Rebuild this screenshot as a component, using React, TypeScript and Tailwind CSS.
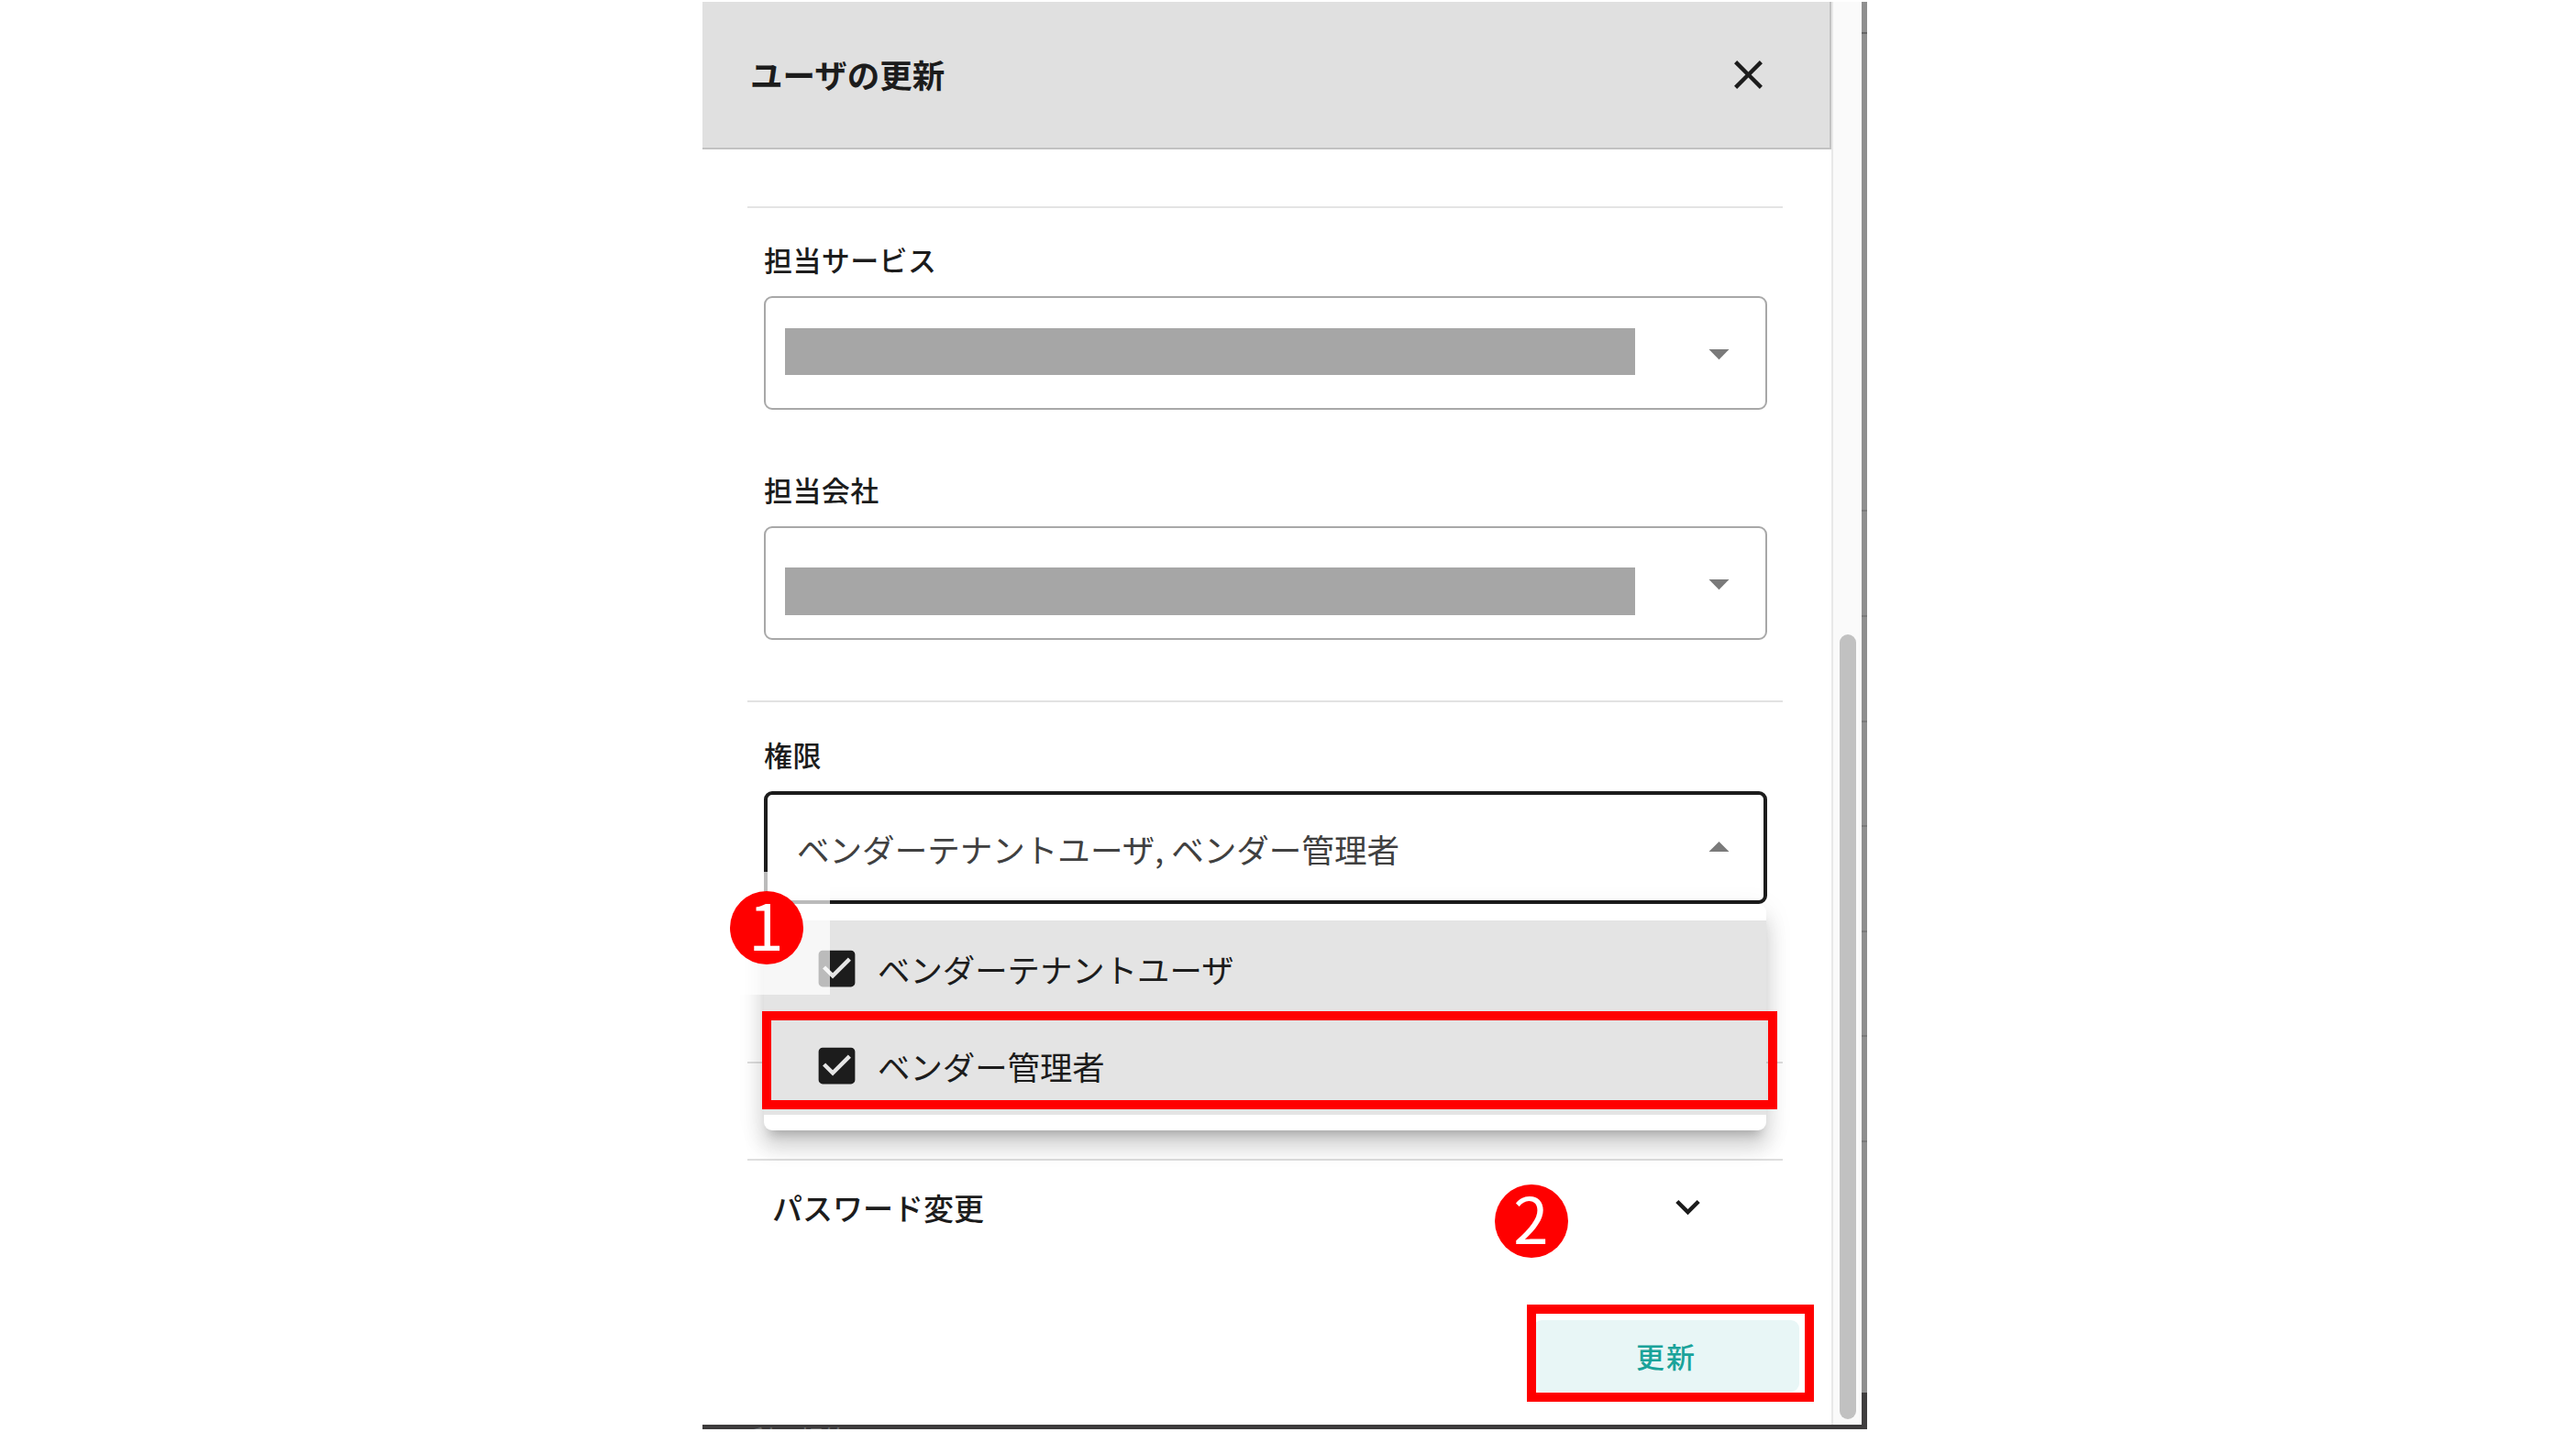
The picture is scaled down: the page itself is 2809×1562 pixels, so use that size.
import { MdArrowDropDown, MdArrowDropUp, MdCheckBox, MdClose, MdExpandMore } from "react-icons/md";

const roles = ["ベンダーテナントユーザ", "ベンダー管理者"];

// y positions of the table rows peeking out behind the drawer
const rowLines = [556, 671, 786, 900, 1015, 1129, 1244];

const FieldLabel = ({ children }: { children: string }) => (
  <div className="h-[46px] pl-[18px] text-[31px] leading-[46px] font-medium tracking-[0.4px]">{children}</div>
);

const MaskedSelect = ({ barClass }: { barClass: string }) => (
  <div className="ml-[18px] flex h-[124px] w-[1094px] items-start justify-between rounded-[9px] border-2 border-[#a8a8a8] pl-[21px] pr-[24px]">
    <div className={`w-[927px] bg-[#a6a6a6] ${barClass}`} />
    <MdArrowDropDown className="mt-[34px] size-[53px] text-[#7a7a7a]" />
  </div>
);

const StepBadge = ({ n, className }: { n: number; className: string }) => (
  <div className={`absolute flex size-[80px] items-center justify-center rounded-full bg-[#ff0000] pb-[10px] text-[69px] leading-[80px] text-white ${className}`}>
    {n}
  </div>
);

const RoleMenu = () => (
  <div className="absolute top-[986px] left-[833px] h-[247px] w-[1093px] rounded-b-[9px] rounded-tr-[9px] bg-white pt-[18px] shadow-[0_11px_11px_-7px_rgba(0,0,0,0.2),0_18px_22px_2px_rgba(0,0,0,0.14),0_7px_31px_4px_rgba(0,0,0,0.06)]">
    {roles.map((role) => (
      <div key={role} className="flex h-[106px] items-center bg-[#e4e4e4] pl-[53px] text-[35.4px]">
        <MdCheckBox className="mb-[2px] size-[53px] text-[#1c1c1c]" />
        <span className="ml-[18px] whitespace-nowrap">{role}</span>
      </div>
    ))}
  </div>
);

export default function App() {
  return (
    <div
      lang="ja"
      className="relative h-[1562px] w-[2809px] overflow-hidden bg-white pt-[2px] pl-[766px] text-[#1c1c1c] font-['Noto_Sans_CJK_JP',sans-serif]"
    >
      <div className="flex h-[1557px] w-[1270px] border-r-[6px] border-b-[5px] border-r-[#8f8f8f] border-b-[#3d3b3c]">
        <div className="w-[1231px]">
          <header className="flex h-[161px] items-center justify-between border-r-2 border-b-2 border-[#c2c2c2] bg-[#e0e0e0] pr-[62px] pb-px pl-[52px]">
            <h1 className="text-[35.5px] font-bold">ユーザの更新</h1>
            <MdClose className="size-[53px]" />
          </header>

          <div className="w-[1178px] pl-[49px]">
            <section className="mt-[62px] border-t-2 border-[#e4e4e4] pt-[33px]">
              <FieldLabel>担当サービス</FieldLabel>
              <div className="mt-[17px]">
                <MaskedSelect barClass="mt-[33px] h-[51px]" />
              </div>
              <div className="mt-[64px]">
                <FieldLabel>担当会社</FieldLabel>
              </div>
              <div className="mt-[17px]">
                <MaskedSelect barClass="mt-[43px] h-[52px]" />
              </div>
            </section>

            <section className="mt-[66px] border-t-2 border-[#e2e2e2] pt-[34px]">
              <FieldLabel>権限</FieldLabel>
              <div className="mt-[17px] ml-[18px] flex h-[123px] w-[1094px] items-center justify-between rounded-[9px] border-4 border-[#1c1c1c] pr-[22px] pl-[32px]">
                <span className="mt-[2px] whitespace-nowrap text-[35.55px] text-[#404040]">ベンダーテナントユーザ, ベンダー管理者</span>
                <MdArrowDropUp className="size-[53px] text-[#7a7a7a]" />
              </div>
            </section>

            <section className="mt-[172px] h-[106px] border-t-2 border-[#dedede]" />

            <section className="flex h-[106px] items-center justify-between border-t-2 border-[#dedede] pr-[77px] pl-[27px]">
              <span className="text-[33px] font-medium">パスワード変更</span>
              <MdExpandMore className="mb-[3px] size-[53px]" />
            </section>
          </div>

          <div className="mt-[70px] flex justify-end pr-[35px]">
            <button className="h-[78px] w-[290px] rounded-[9px] bg-[#e8f6f6] pt-px text-[31px] font-medium tracking-[2px] text-[#1aa39a]">
              更新
            </button>
          </div>
        </div>

        <div className="flex flex-1 flex-col items-center border-l-2 border-[#e8e8e8] bg-[#fafafa] pt-[690px]">
          <div className="h-[856px] w-[18px] rounded-full bg-[#c1c1c1]" />
        </div>
      </div>

      {rowLines.map((y) => (
        <div key={y} className="absolute left-[2030px] h-[2px] w-[6px] bg-[#7a7a7a]" style={{ top: y }} />
      ))}
      <div className="absolute top-[35px] left-[2030px] h-[2px] w-[6px] bg-[#666]" />
      <div className="absolute top-[1519px] left-[2030px] h-[40px] w-[6px] bg-[#403e3f]" />

      {/* footer link of the page, cut off below the drawer */}
      <div className="absolute top-[1554px] left-[793px] h-[5px] overflow-hidden text-[27px] leading-[30px] whitespace-nowrap text-[#6e6e6e]">
        AI利用規約
      </div>

      <RoleMenu />

      {/* step callouts */}
      <div className="absolute top-[951px] left-[766px] h-[134px] w-[139px] bg-white/70" />
      <StepBadge n={1} className="top-[972px] left-[795.5px]" />
      <div className="absolute top-[1103px] left-[831px] h-[107px] w-[1107px] border-10 border-[#ff0000]" />
      <StepBadge n={2} className="top-[1292px] left-[1629.5px]" />
      <div className="absolute top-[1423px] left-[1665px] h-[106px] w-[313px] border-10 border-[#ff0000]" />
    </div>
  );
}
